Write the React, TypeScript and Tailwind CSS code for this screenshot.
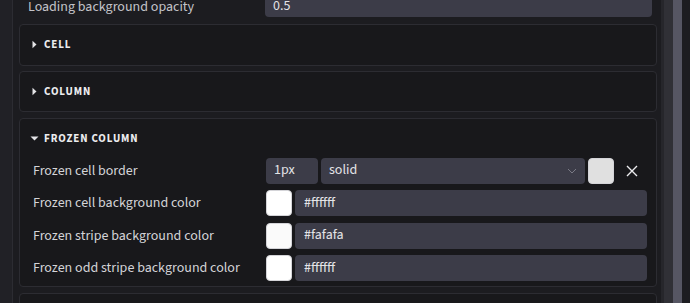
import React from "react";

const font = { fontFamily: "'Source Sans 3', Lato, 'Noto Sans', sans-serif" };

function Chevron({ open }: { open: boolean }) {
  return open ? (
    <svg width="9" height="9" viewBox="0 0 9 9" className="shrink-0">
      <path d="M0.5 2.5 L8.5 2.5 L4.5 6.5 Z" fill="#e4e4e7" />
    </svg>
  ) : (
    <svg width="9" height="9" viewBox="0 0 9 9" className="shrink-0">
      <path d="M2.5 0.8 L6.5 4.5 L2.5 8.2 Z" fill="#e4e4e7" />
    </svg>
  );
}

function Header({ title, open }: { title: string; open: boolean }) {
  return (
    <div className="h-[39px] flex items-center pl-[10px] gap-[5px]">
      <Chevron open={open} />
      <span className="text-[11px] font-bold tracking-[0.08em] text-[#ececef] leading-none">{title}</span>
    </div>
  );
}

function Swatch({ color }: { color: string }) {
  return <div className="w-[26px] h-[26px] rounded-[4px] shrink-0 border border-[#d4d4d8]" style={{ background: color }} />;
}

function ColorRow({ label, color, value }: { label: string; color: string; value: string }) {
  return (
    <div className="flex items-center h-[26px]">
      <div className="w-[233px] text-[14px] text-[#d4d4d8] leading-none">{label}</div>
      <div className="flex-1 flex gap-[3px]">
        <Swatch color={color} />
        <div className="flex-1 h-[26px] rounded-[4px] bg-[#3c3c48] flex items-center px-[9px] text-[14px] text-[#e4e4e7]">{value}</div>
      </div>
    </div>
  );
}

export default function App() {
  return (
    <div className="w-[690px] h-[303px] overflow-hidden flex bg-[#1c1c20]" style={font}>
      <div className="w-[12px] bg-[#212126] shrink-0" />
      <div className="w-px bg-[#2c2c32] shrink-0" />
      <div className="flex-1 min-w-0 pl-[6px] pr-[4px] flex flex-col">
        <div className="flex items-center h-[26px] mt-[-9px] pl-[9px] pr-[5px]">
          <div className="w-[237px] text-[14px] text-[#c4c4ca] leading-none pt-[5px]">Loading background opacity</div>
          <div className="flex-1 h-[26px] rounded-[4px] bg-[#3c3c48] flex items-center px-[8px] pt-[5px] text-[14px] text-[#e4e4e7]">0.5</div>
        </div>
        <div className="flex flex-col gap-[5.5px] mt-[7px]">
          <div className="h-[41.5px] rounded-[4px] border border-[#2c2c32] bg-[#18181b]">
            <Header title="CELL" open={false} />
          </div>
          <div className="h-[41px] rounded-[4px] border border-[#2c2c32] bg-[#18181b]">
            <Header title="COLUMN" open={false} />
          </div>
          <div className="rounded-[4px] border border-[#2c2c32] bg-[#18181b] pb-[5px]">
            <Header title="FROZEN COLUMN" open={true} />
            <div className="flex flex-col gap-[6.6px] pl-[13px] pr-[9px]">
              <div className="flex items-center h-[26px]">
                <div className="w-[233px] text-[14px] text-[#d4d4d8] leading-none">Frozen cell border</div>
                <div className="flex-1 flex gap-[3px] items-center">
                  <div className="w-[52px] h-[26px] rounded-[4px] bg-[#3c3c48] flex items-center px-[8px] text-[14px] text-[#e4e4e7]">1px</div>
                  <div className="flex-1 h-[26px] rounded-[4px] bg-[#3c3c48] flex items-center pl-[8px] pr-[8px] text-[14px] text-[#e4e4e7]">
                    <span className="flex-1">solid</span>
                    <svg width="10" height="6" viewBox="0 0 10 6">
                      <path d="M1 1 L5 5 L9 1" stroke="#7a7a85" strokeWidth="1" fill="none" />
                    </svg>
                  </div>
                  <Swatch color="#e0e0e0" />
                  <div className="w-[30px] flex items-center justify-center">
                    <svg width="12" height="12" viewBox="0 0 12 12">
                      <path d="M1 1 L11 11 M11 1 L1 11" stroke="#ececef" strokeWidth="1.4" />
                    </svg>
                  </div>
                </div>
              </div>
              <ColorRow label="Frozen cell background color" color="#ffffff" value="#ffffff" />
              <ColorRow label="Frozen stripe background color" color="#fafafa" value="#fafafa" />
              <ColorRow label="Frozen odd stripe background color" color="#ffffff" value="#ffffff" />
            </div>
          </div>
          <div className="h-[41px] rounded-[4px] border border-[#2c2c32] bg-[#18181b]" />
        </div>
      </div>
      <div className="w-[3px] bg-[#26262b] shrink-0" />
      <div className="w-[9px] bg-[#303036] shrink-0" />
      <div className="w-[9px] bg-[#565663] shrink-0" />
      <div className="w-[8px] bg-[#1d1d21] shrink-0" />
    </div>
  );
}
